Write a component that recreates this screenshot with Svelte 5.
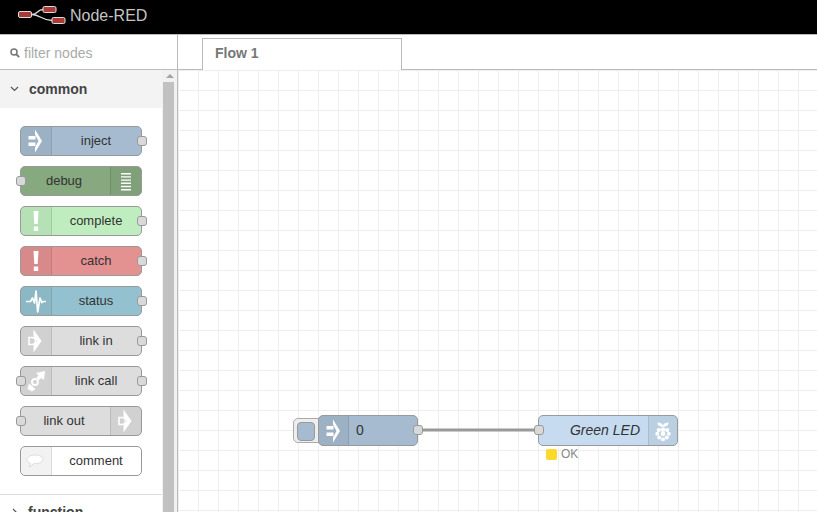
<script lang="ts">
  type PaletteNode = {
    label: string;
    icon: string;
    color: string;
    input?: boolean;
    output?: boolean;
    right?: boolean;
  };

  const nodes: PaletteNode[] = [
    { label: 'inject', icon: 'inject', color: '#a6bbcf', output: true },
    { label: 'debug', icon: 'debug', color: '#87a980', input: true, right: true },
    { label: 'complete', icon: 'alert', color: '#c0edc0', output: true },
    { label: 'catch', icon: 'alert', color: '#e49191', output: true },
    { label: 'status', icon: 'status', color: '#94c1d0', output: true },
    { label: 'link in', icon: 'link', color: '#dddddd', output: true },
    { label: 'link call', icon: 'call', color: '#dddddd', input: true, output: true },
    { label: 'link out', icon: 'link', color: '#dddddd', input: true, right: true },
    { label: 'comment', icon: 'comment', color: '#ffffff' }
  ];
</script>

{#snippet icon(name: string)}
  <svg class="glyph" viewBox="0 0 30 28" width="30" height="28" fill="#fff">
    {#if name === 'inject'}
      <path d="M7.500 9h7v3.500h-7zM7.500 15.500h7V19h-7zM14 2.500L21 14l-7 11.500v-5L17.500 14 14 7.500z" />
    {:else if name === 'debug'}
      <path d="M10 6h10v1.400H10zM10 9.200h10v1.400H10zM10 12.400h10v1.400H10zM10 15.600h10v1.400H10zM10 18.800h10v1.400H10zM10 22h10v1.400H10z" />
    {:else if name === 'alert'}
      <path d="M12.500 4h5l-.8 13h-3.400zM12.800 19.500h4.400V24h-4.400z" />
    {:else if name === 'status'}
      <path d="M5 14.500h4.500L11.500 11l2 5L15 4l1.700 21L19 11l1.800 4.500 1.200-1h3" fill="none" stroke="#fff" stroke-width="1.700" stroke-linejoin="round" />
    {:else if name === 'link'}
      <path d="M12.500 2.500L20.500 14l-8 11.500v-7L16 14l-3.500-4.500z" />
      <path d="M8 10.500h3a3.500 3.500 0 0 1 0 7H8z" fill="none" stroke="#fff" stroke-width="1.600" />
    {:else if name === 'call'}
      <path d="M15 6l9-2-1 9-2.500-2-2.500 2-2.500-2.500 2-2z" />
      <path d="M8 16.500l6.500 5.500-3.500 2.500-4.500-2.500z" />
      <circle cx="14" cy="15" r="3" fill="none" stroke="#fff" stroke-width="1.800" />
    {:else if name === 'comment'}
      <path d="M14 8c4.800 0 8 1.900 8 4.300 0 2.500-3.200 4.400-8 4.400h-1.500L8.600 20l.6-3.700C7 15.500 6 14 6 12.300 6 9.900 9.200 8 14 8z" fill="#fff" stroke="#dcdcdc" stroke-width="1" />
    {/if}
  </svg>
{/snippet}

<div class="app">
  <header class="topbar">
    <svg class="logo" viewBox="0 0 50 20" width="50" height="20">
      <path d="M15 8.500c6 0 5-5 11-5M15 8.500c8 0 10 6 20 6" fill="none" stroke="#ddd" stroke-width="1.300" />
      <rect x="1.500" y="5.500" width="13" height="6" rx="1.500" fill="#a83a3a" stroke="#ddd" />
      <rect x="26" y="0.500" width="13" height="6" rx="1.500" fill="#a83a3a" stroke="#ddd" />
      <rect x="35" y="11.500" width="13" height="6" rx="1.500" fill="#a83a3a" stroke="#ddd" />
    </svg>
    <span class="brand">Node-RED</span>
  </header>

  <div class="workspace">
    <aside class="palette">
      <div class="filter">
        <svg viewBox="0 0 10 10" width="10" height="10">
          <circle cx="4" cy="4" r="3" fill="none" stroke="#777" stroke-width="1.500" />
          <path d="M6 6l3.200 3.200" stroke="#777" stroke-width="1.800" />
        </svg>
        <span>filter nodes</span>
      </div>
      <div class="scroller">
        <div class="categories">
          <div class="category-head">
            <svg viewBox="0 0 9 6" width="9" height="6"><path d="M1 1l3.500 3.500L8 1" fill="none" stroke="#555" stroke-width="1.200" /></svg>
            <span>common</span>
          </div>
          <div class="node-list">
            {#each nodes as n}
              <div class="pnode" class:right={n.right} style="background:{n.color}">
                {#if n.input}<i class="port left"></i>{/if}
                <div class="pnode-icon">{@render icon(n.icon)}</div>
                <span class="pnode-label">{n.label}</span>
                {#if n.output}<i class="port rgt"></i>{/if}
              </div>
            {/each}
          </div>
          <div class="category-next">
            <svg viewBox="0 0 6 9" width="6" height="9"><path d="M1 1l3.500 3.500L1 8" fill="none" stroke="#555" stroke-width="1.200" /></svg>
            <span>function</span>
          </div>
        </div>
        <div class="scrollbar">
          <div class="arrow"></div>
          <div class="thumb"></div>
        </div>
      </div>
    </aside>

    <main class="editor">
      <div class="tabs"><div class="tab">Flow 1</div></div>
      <div class="canvas">
        <svg class="wire" width="639" height="442">
          <path d="M240 360H360" fill="none" stroke="#999" stroke-width="3" />
        </svg>

        <div class="fnode inject-node">
          <div class="button"><b></b></div>
          <div class="fnode-body" style="background:#a6bbcf">
            <div class="pnode-icon">{@render icon('inject')}</div>
            <span class="fnode-label">0</span>
            <i class="port rgt"></i>
          </div>
        </div>

        <div class="fnode led-node">
          <div class="fnode-body" style="background:#c6dbef">
            <i class="port left"></i>
            <span class="fnode-label led">Green LED</span>
            <div class="pnode-icon end">
              <svg viewBox="0 0 30 28" width="30" height="28" fill="#fff">
                <path d="M15 8c-1-2-3-3-6-3 0 3 2 4.500 6 4.500s6-1.500 6-4.500c-3 0-5 1-6 3z" />
                <circle cx="15" cy="12.500" r="2.400" />
                <circle cx="10.500" cy="13" r="2.300" />
                <circle cx="19.500" cy="13" r="2.300" />
                <circle cx="8.800" cy="17" r="2.100" />
                <circle cx="21.200" cy="17" r="2.100" />
                <circle cx="15" cy="17" r="2.600" />
                <circle cx="11" cy="21" r="2.200" />
                <circle cx="19" cy="21" r="2.200" />
                <circle cx="15" cy="23" r="2.100" />
              </svg>
            </div>
          </div>
        </div>

        <div class="status"><i></i><span>OK</span></div>
      </div>
    </main>
  </div>
</div>

<style>
  :global(body) {
    margin: 0;
    overflow: hidden;
    font-family: "Liberation Sans", Arial, sans-serif;
    background: #fff;
  }
  .app {
    width: 817px;
    height: 512px;
    display: flex;
    flex-direction: column;
    overflow: hidden;
  }
  .topbar {
    height: 34px;
    flex: none;
    background: #000;
    display: flex;
    align-items: center;
    padding: 0 0 2px 17px;
    gap: 3px;
    box-sizing: border-box;
  }
  .brand {
    color: #c4c4c4;
    font-size: 16px;
  }
  .workspace {
    flex: 1;
    display: flex;
    min-height: 0;
    border-top: 1px solid #bbb;
  }
  .palette {
    width: 177px;
    flex: none;
    border-right: 1px solid #bbb;
    display: flex;
    flex-direction: column;
    min-height: 0;
  }
  .filter {
    height: 35px;
    flex: none;
    border-bottom: 1px solid #bbb;
    display: flex;
    align-items: center;
    gap: 4px;
    padding: 2px 0 0 10px;
    box-sizing: border-box;
    color: #aaa;
    font-size: 14px;
  }
  .scroller {
    flex: 1;
    display: flex;
    min-height: 0;
    overflow: hidden;
  }
  .categories {
    width: 162px;
    flex: none;
  }
  .category-head {
    height: 38px;
    background: #f3f3f3;
    display: flex;
    align-items: center;
    gap: 10px;
    padding-left: 10px;
    font-size: 14px;
    font-weight: bold;
    color: #444;
  }
  .node-list {
    display: flex;
    flex-direction: column;
    gap: 10px;
    padding: 18px 0 0 20px;
    height: 368px;
  }
  .pnode {
    position: relative;
    width: 122px;
    height: 30px;
    box-sizing: border-box;
    border: 1px solid #999;
    border-radius: 5px;
    display: flex;
    font-size: 13px;
    color: #333;
  }
  .pnode.right { flex-direction: row-reverse; }
  .pnode-icon {
    width: 30px;
    flex: none;
    background: rgba(0, 0, 0, 0.05);
    border-right: 1px solid rgba(0, 0, 0, 0.1);
    border-radius: 4px 0 0 4px;
    display: flex;
    align-items: center;
    justify-content: center;
  }
  .fnode .pnode-icon { width: 29px; }
  .pnode.right .pnode-icon, .fnode .pnode-icon.end {
    border-right: 0;
    border-left: 1px solid rgba(0, 0, 0, 0.1);
    border-radius: 0 4px 4px 0;
  }
  .fnode .pnode-icon.end { width: 28px; }
  .pnode-label {
    flex: 1;
    align-self: center;
    text-align: center;
    padding: 0 1px 2px 0;
  }
  .pnode.right .pnode-label { padding-right: 3px; }
  .glyph { display: block; flex: none; }
  .port {
    position: absolute;
    top: 9px;
    width: 8px;
    height: 8px;
    background: #d9d9d9;
    border: 1px solid #999;
    border-radius: 3px;
  }
  .port.left { left: -5px; }
  .port.rgt { right: -6px; }
  .category-next {
    border-top: 1px solid #ddd;
    height: 34px;
    display: flex;
    gap: 10px;
    align-items: center;
    padding-left: 12px;
    font-size: 14px;
    font-weight: bold;
    color: #444;
  }
  .scrollbar {
    width: 15px;
    flex: none;
    background: #f1f1f1;
    display: flex;
    flex-direction: column;
    align-items: center;
  }
  .arrow {
    width: 0;
    height: 0;
    margin: 4px 0;
    border-left: 4px solid transparent;
    border-right: 4px solid transparent;
    border-bottom: 4px solid #a3a3a3;
  }
  .thumb {
    width: 11px;
    flex: 1;
    margin-right: 2px;
    background: #c1c1c1;
  }
  .editor {
    flex: 1;
    display: flex;
    flex-direction: column;
    min-width: 0;
  }
  .tabs {
    height: 35px;
    flex: none;
    box-sizing: border-box;
    border-bottom: 1px solid #bbb;
    padding: 3px 0 0 24px;
  }
  .tab {
    width: 200px;
    height: 32px;
    box-sizing: border-box;
    border: 1px solid #bbb;
    border-bottom: 0;
    background: #fff;
    padding: 6px 0 0 12px;
    font-size: 14px;
    font-weight: bold;
    color: #777;
  }
  .canvas {
    position: relative;
    flex: 1;
    background-color: #fff;
    background-image:
      linear-gradient(#eee 1px, transparent 1px),
      linear-gradient(90deg, #eee 1px, transparent 1px);
    background-size: 20px 20px;
  }
  .wire { position: absolute; left: 0; top: 0; }
  .fnode { position: absolute; }
  .inject-node { left: 140px; top: 345px; }
  .led-node { left: 360px; top: 345px; }
  .fnode-body {
    position: relative;
    width: 100px;
    height: 31px;
    box-sizing: border-box;
    border: 1px solid #999;
    border-radius: 5px;
    display: flex;
    align-items: stretch;
    font-size: 14px;
    color: #333;
  }
  .led-node .fnode-body { width: 140px; }
  .fnode-label {
    flex: 1;
    align-self: center;
    padding: 0 0 1px 7px;
  }
  .fnode-label.led {
    font-style: italic;
    text-align: right;
    padding: 0 8px 1px 0;
  }
  .button {
    position: absolute;
    left: -25px;
    top: 3px;
    width: 30px;
    height: 25px;
    box-sizing: border-box;
    background: #eee;
    border: 1px solid #aaa;
    border-radius: 5px;
    padding: 3px;
  }
  .button b {
    display: block;
    width: 16px;
    height: 17px;
    background: #a6bbcf;
    border: 1px solid #999;
    border-radius: 4px;
  }
  .inject-node .fnode-body { z-index: 1; }
  .status {
    position: absolute;
    left: 368px;
    top: 377px;
    display: flex;
    align-items: center;
    gap: 4px;
    font-size: 12px;
    color: #888;
  }
  .status i {
    width: 11px;
    height: 11px;
    border-radius: 2px;
    background: #fcd92c;
  }
</style>
